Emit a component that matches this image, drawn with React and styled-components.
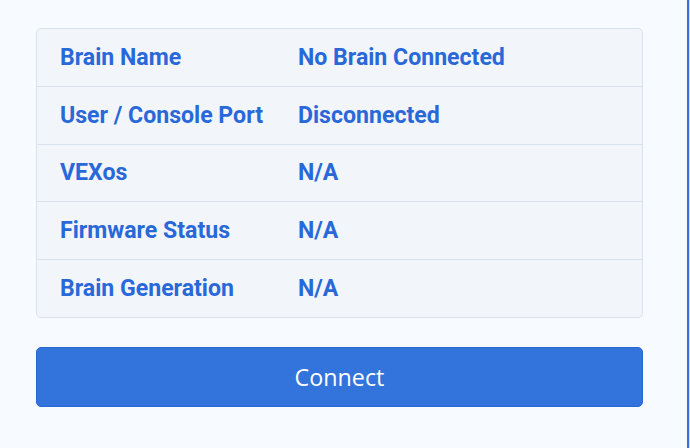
import React from 'react';
import styled, { createGlobalStyle } from 'styled-components';

const GlobalStyle = createGlobalStyle`
  html, body {
    margin: 0;
    padding: 0;
    background-color: #f7faff;
  }
`;

const Page = styled.div`
  display: flex;
  width: 690px;
  height: 448px;
  overflow: hidden;
`;

const Panel = styled.div`
  flex: 1;
  display: flex;
  flex-direction: column;
  gap: 29px;
  padding: 28px 44px 0 36px;
  background-color: #f7faff;
  border-right: 2px solid #3a70d9;
  border-bottom-right-radius: 3px;
  height: 446px;
`;

const Gutter = styled.div`
  width: 1px;
  background-color: #d9dde3;
`;

const InfoTable = styled.div`
  background-color: #f2f5fa;
  border: 1px solid #d9e2ee;
  border-radius: 5px;
`;

const Row = styled.div`
  display: grid;
  grid-template-columns: 238px 1fr;
  align-items: center;
  height: 56.8px;
  padding-left: 23px;
  border-top: ${props => (props.first ? 'none' : '1px solid #d9e2ee')};
`;

const Cell = styled.span`
  font-family: Roboto, "Liberation Sans", sans-serif;
  font-weight: 700;
  font-size: 23.1px;
  color: #2968d8;
`;

const ConnectButton = styled.button`
  height: 60px;
  border: 1px solid #2b67d2;
  border-radius: 5px;
  background-color: #3273dc;
  color: #ffffff;
  font-family: "Open Sans", "Liberation Sans", sans-serif;
  font-size: 23.3px;
  cursor: pointer;
`;

const rows = [
  ['Brain Name', 'No Brain Connected'],
  ['User / Console Port', 'Disconnected'],
  ['VEXos', 'N/A'],
  ['Firmware Status', 'N/A'],
  ['Brain Generation', 'N/A'],
];

const App = () => {
  return (
    <Page>
      <GlobalStyle />
      <Panel>
        <InfoTable>
          {rows.map((row, index) => (
            <Row key={index} first={index === 0}>
              <Cell>{row[0]}</Cell>
              <Cell>{row[1]}</Cell>
            </Row>
          ))}
        </InfoTable>
        <ConnectButton>Connect</ConnectButton>
      </Panel>
      <Gutter />
    </Page>
  );
};

export default App;
